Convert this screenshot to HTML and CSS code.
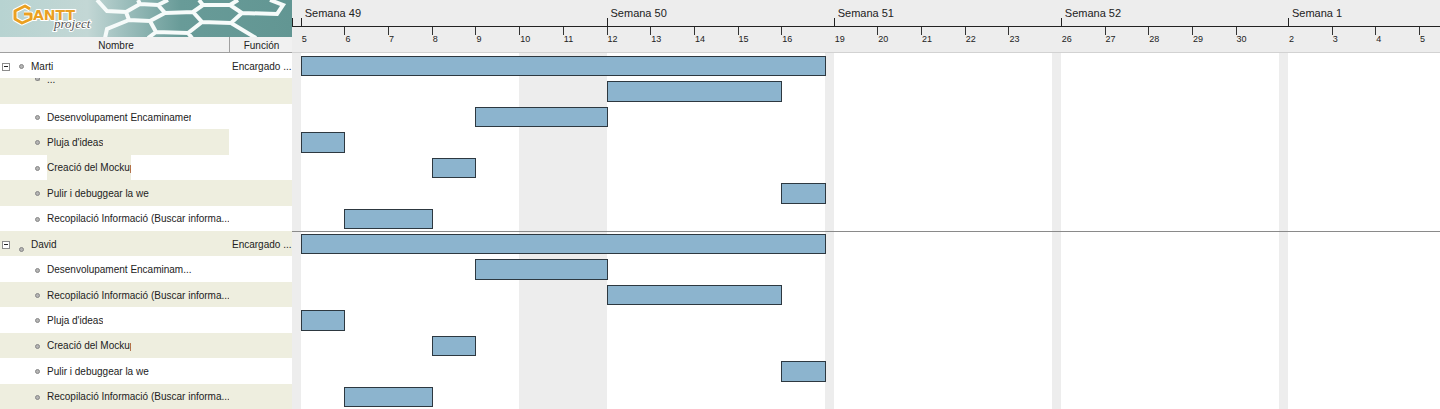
FILE: index.html
```html
<!DOCTYPE html>
<html lang="es">
<head>
<meta charset="utf-8">
<meta name="viewport" content="width=device-width, initial-scale=1">
<title>GanttProject</title>
<link rel="stylesheet" href="styles.css">
</head>
<body>
<div class="app">
  <aside class="side">
    <svg class="banner" viewBox="0 0 292 37" preserveAspectRatio="xMinYMin slice" role="img" aria-label="Gantt project">
      <defs>
        <linearGradient id="sky" x1="0" y1="0" x2="1" y2="0">
          <stop offset="0" stop-color="#b7d3d1"/>
          <stop offset="0.3" stop-color="#c3d7d5"/>
          <stop offset="0.42" stop-color="#9fc0be"/>
          <stop offset="0.62" stop-color="#689b98"/>
          <stop offset="1" stop-color="#629693"/>
        </linearGradient>
      </defs>
      <rect width="292" height="37" fill="url(#sky)"/>
      <g class="mesh">
        <path d="M97 0L107 11L126 12L140 4L138 0M140 4L158 5L168 0M158 5L165 13L150 21L129 20L126 12M129 20L107 29L105 38M150 21L156 32L148 38M156 32L188 33L202 22L193 12L165 13M188 33L192 38M193 12L203 5L199 0M203 5L230 5L238 0M230 5L242 13L231 23L202 22M242 13L277 14L283 5L270 0M231 23L256 38"/>
      </g>
      <path class="hex-halo" d="M30 9L25 6L15 11V19L22 23L31 19V14H24"/>
      <text class="brand" x="33" y="20">ANTT</text>
      <text class="brand-sub" x="54" y="28">project</text>
      <path class="hex" d="M30 9L25 6L15 11V19L22 23L31 19V14H24"/>
    </svg>
    <table class="people">
      <thead>
        <tr><th scope="col">Nombre</th><th scope="col">Función</th></tr>
      </thead>
      <tbody>
        <tr class="person"><td><button class="toggle" type="button" aria-label="Contraer Marti"></button><i class="dot"></i><span>Marti</span></td><td>Encargado ...</td></tr>
        <tr class="shade scrolled"><td><i class="dot"></i><span>...</span></td><td></td></tr>
        <tr><td><i class="dot"></i><span class="cut cut-l">Desenvolupament Encaminament</span></td><td></td></tr>
        <tr class="shade-name"><td><i class="dot"></i><span class="cut cut-s">Pluja d'ideas</span></td><td></td></tr>
        <tr><td><i class="dot"></i><span class="cut cut-m marked">Creació del Mockup</span></td><td></td></tr>
        <tr class="shade"><td><i class="dot"></i><span>Pulir i debuggear la we</span></td><td></td></tr>
        <tr><td><i class="dot"></i><span>Recopilació Informació (Buscar informa...</span></td><td></td></tr>
        <tr class="person shade low"><td><button class="toggle" type="button" aria-label="Contraer David"></button><i class="dot"></i><span>David</span></td><td>Encargado ...</td></tr>
        <tr><td><i class="dot"></i><span>Desenvolupament Encaminam...</span></td><td></td></tr>
        <tr class="shade"><td><i class="dot"></i><span>Recopilació Informació (Buscar informa...</span></td><td></td></tr>
        <tr><td><i class="dot"></i><span class="cut cut-s">Pluja d'ideas</span></td><td></td></tr>
        <tr class="shade"><td><i class="dot"></i><span class="cut cut-m">Creació del Mockup</span></td><td></td></tr>
        <tr><td><i class="dot"></i><span>Pulir i debuggear la we</span></td><td></td></tr>
        <tr class="shade"><td><i class="dot"></i><span>Recopilació Informació (Buscar informa...</span></td><td></td></tr>
      </tbody>
    </table>
  </aside>
  <main class="chart">
    <div class="weeks cols">
      <span class="lead"></span>
      <span class="w49">Semana 49</span><span class="w50">Semana 50</span><span class="w51">Semana 51</span><span class="w52">Semana 52</span><span class="w1">Semana 1</span>
    </div>
    <div class="days cols">
      <span class="first c2">5</span><span>6</span><span>7</span><span>8</span><span>9</span><span>10</span><span>11</span><span>12</span><span>13</span><span>14</span><span>15</span><span>16</span>
      <span class="first c15">19</span><span>20</span><span>21</span><span>22</span><span>23</span>
      <span class="first c21">26</span><span>27</span><span>28</span><span>29</span><span>30</span>
      <span class="first c27">2</span><span>3</span><span>4</span><span>5</span>
    </div>
    <div class="plot cols">
      <i class="off o1"></i><i class="off o2"></i><i class="off o3"></i><i class="off o4"></i><i class="off o5"></i>
      <i class="rule"></i>
      <i class="bar all r1"></i>
      <i class="bar d12-15 r2"></i>
      <i class="bar d9-11 r3"></i>
      <i class="bar d5 r4"></i>
      <i class="bar d8 r5"></i>
      <i class="bar d16 r6"></i>
      <i class="bar d6-7 r7"></i>
      <i class="bar all r8"></i>
      <i class="bar d9-11 r9"></i>
      <i class="bar d12-15 r10"></i>
      <i class="bar d5 r11"></i>
      <i class="bar d8 r12"></i>
      <i class="bar d16 r13"></i>
      <i class="bar d6-7 r14"></i>
    </div>
  </main>
</div>
</body>
</html>
```
FILE: styles.css
```css
* { box-sizing: border-box; }
body {
  margin: 0;
  font: 10px/12px "Liberation Sans", Arial, sans-serif;
  color: #222;
  background: #fff;
}
.app { display: flex; min-height: 100vh; }

/* resource list */
.side { flex: 0 0 292px; display: flex; flex-direction: column; }
.banner { display: block; width: 100%; height: 37px; }
.mesh path { fill: none; stroke: #f6fbfa; stroke-width: 4; }
.hex, .hex-halo { fill: none; stroke-linejoin: round; }
.hex-halo { stroke: #fff; stroke-width: 5; }
.hex { stroke: #eaa021; stroke-width: 3; }
.brand {
  font: bold 14px "DejaVu Sans", sans-serif;
  fill: #eaa021;
  stroke: #fff;
  stroke-width: 2;
  paint-order: stroke;
}
.brand-sub {
  font: italic 13px "Liberation Serif", serif;
  fill: #555;
  stroke: #fff;
  stroke-width: 2;
  paint-order: stroke;
}
.people { flex: 1; display: flex; flex-direction: column; }
.people thead { display: block; }
.people tr { display: grid; grid-template-columns: 229px 1fr; min-height: 0; }
.people th {
  height: 16px;
  padding: 2px 0 0 3px;
  font-weight: normal;
  line-height: 13px;
  background: #f1f1f1;
  border-bottom: 1px solid #a0a0a0;
}
.people th + th { padding-left: 1px; border-left: 1px solid #a0a0a0; }
.people tbody { flex: 1; display: grid; grid-template-rows: repeat(14, minmax(0, 1fr)); }
.people td {
  display: flex;
  align-items: center;
  padding: 2px 0 0 35px;
  overflow: hidden;
  white-space: nowrap;
}
.people td + td { padding-left: 3px; }
.people .person td:first-child { padding-left: 2px; }
.shade, .shade-name td:first-child { background: #eeeedf; }
.toggle {
  flex: none;
  width: 8px;
  height: 8px;
  margin-right: 9px;
  padding: 0;
  display: grid;
  place-items: center;
  background: #fff;
  border: 1px solid #8c8c8c;
}
.toggle::before { content: ""; width: 4px; height: 1px; background: #222; }
.dot {
  flex: none;
  width: 5px;
  height: 5px;
  margin-right: 7px;
  border: 1px solid #868686;
  border-radius: 50%;
  background: #b4b4b4;
}
.people .scrolled td { align-items: flex-start; padding-top: 0; }
.scrolled .dot { height: 3px; border-top: 0; border-radius: 0 0 3px 3px; }
.scrolled span { line-height: 4px; }
.low .dot { align-self: flex-end; margin-bottom: 4px; }
.cut { overflow: hidden; }
.cut-s { width: 56px; }
.cut-m { width: 84px; }
.cut-l { width: 144px; }
.marked {
  align-self: stretch;
  display: flex;
  align-items: center;
  margin-top: -2px;
  padding-top: 2px;
  background: #eeeedf;
}

/* timeline: a working day is 25 parts wide, a folded weekend 5 */
.chart { flex: 1; min-width: 0; display: flex; flex-direction: column; }
.cols {
  display: grid;
  grid-template-columns:
    5fr repeat(12, 25fr) 5fr repeat(5, 25fr) 5fr repeat(5, 25fr) 5fr repeat(3, 25fr) 12fr;
}
.cols > * { min-width: 0; }
.weeks { height: 27px; background: #ededed; border-bottom: 1px solid #222; }
.weeks span {
  padding: 7px 0 0 4px;
  font-size: 11px;
  white-space: nowrap;
  background: linear-gradient(#222, #222) 0 100% / 1px 8px no-repeat;
}
.weeks .lead { padding: 0; }
.w49 { grid-column: 2 / 9; }
.w50 { grid-column: 9 / 15; }
.w51 { grid-column: 15 / 21; }
.w52 { grid-column: 21 / 27; }
.w1 { grid-column: 27 / -1; }
.days { height: 26px; background: #ededed; border-bottom: 1px solid #d2d2d2; }
.days span {
  padding: 6px 0 0 1px;
  font-size: 9px;
  background: linear-gradient(#333, #333) 0 0 / 1px 8px no-repeat;
}
.days .first { background: none; }
.c2 { grid-column: 2; }
.c15 { grid-column: 15; }
.c21 { grid-column: 21; }
.c27 { grid-column: 27; }
.plot { flex: 1; grid-template-rows: repeat(14, minmax(0, 1fr)); }
.off { grid-row: 1 / -1; background: #ededed; }
.o1 { grid-column: 1; }
.o2 { grid-column: 7 / 9; }
.o3 { grid-column: 14; }
.o4 { grid-column: 20; }
.o5 { grid-column: 26; }
.rule { grid-row: 8; grid-column: 1 / -1; border-top: 1px solid #8a8a8a; }
.bar { margin: 3px -1px 2px 0; background: #8cb4ce; border: 1px solid #2d3840; }
.all { grid-column: 2 / 14; }
.d5 { grid-column: 2; }
.d6-7 { grid-column: 3 / 5; }
.d8 { grid-column: 5; }
.d9-11 { grid-column: 6 / 9; }
.d12-15 { grid-column: 9 / 13; }
.d16 { grid-column: 13; }
.r1 { grid-row: 1; }
.r2 { grid-row: 2; }
.r3 { grid-row: 3; }
.r4 { grid-row: 4; }
.r5 { grid-row: 5; }
.r6 { grid-row: 6; }
.r7 { grid-row: 7; }
.r8 { grid-row: 8; }
.r9 { grid-row: 9; }
.r10 { grid-row: 10; }
.r11 { grid-row: 11; }
.r12 { grid-row: 12; }
.r13 { grid-row: 13; }
.r14 { grid-row: 14; }
```
